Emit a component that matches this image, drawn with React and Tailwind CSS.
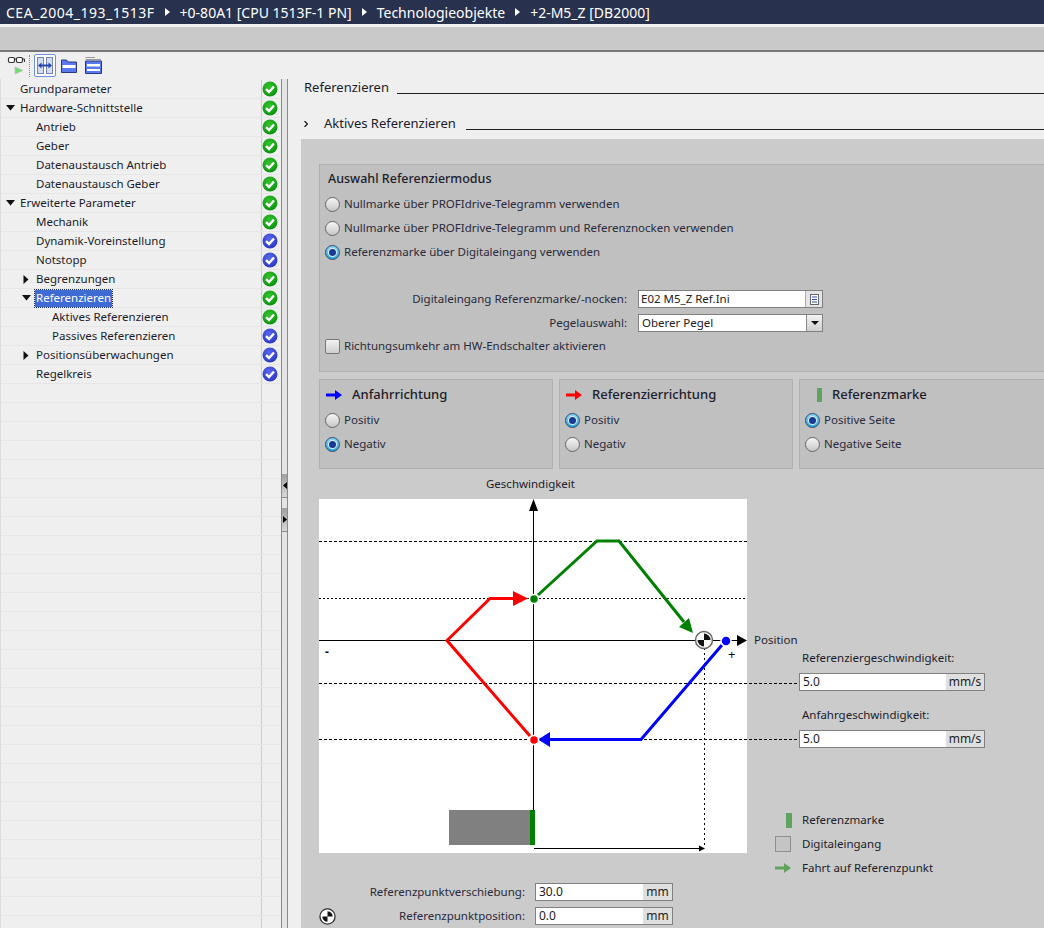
import React from 'react'

const font = { fontFamily: '"Noto Sans", sans-serif' }

const treeRows = [
  { label: 'Grundparameter', indent: 20, status: 'green' },
  { label: 'Hardware-Schnittstelle', indent: 20, arrow: 'down', status: 'green' },
  { label: 'Antrieb', indent: 36, status: 'green' },
  { label: 'Geber', indent: 36, status: 'green' },
  { label: 'Datenaustausch Antrieb', indent: 36, status: 'green' },
  { label: 'Datenaustausch Geber', indent: 36, status: 'green' },
  { label: 'Erweiterte Parameter', indent: 20, arrow: 'down', status: 'green' },
  { label: 'Mechanik', indent: 36, status: 'green' },
  { label: 'Dynamik-Voreinstellung', indent: 36, status: 'blue' },
  { label: 'Notstopp', indent: 36, status: 'blue' },
  { label: 'Begrenzungen', indent: 36, arrow: 'right', status: 'green' },
  { label: 'Referenzieren', indent: 36, arrow: 'down', status: 'green', selected: true },
  { label: 'Aktives Referenzieren', indent: 52, status: 'green' },
  { label: 'Passives Referenzieren', indent: 52, status: 'blue' },
  { label: 'Positionsüberwachungen', indent: 36, arrow: 'right', status: 'blue' },
  { label: 'Regelkreis', indent: 36, status: 'blue' },
  ...Array.from({ length: 30 }, () => ({})),
]

function StatusIcon({ color }) {
  const id = color === 'green' ? 'gGreen' : 'gBlue'
  return (
    <svg width="16" height="16" viewBox="0 0 16 16">
      <defs>
        <radialGradient id={id} cx="0.45" cy="0.35" r="0.75">
          <stop offset="0" stopColor={color === 'green' ? '#33c52c' : '#5a68ee'} />
          <stop offset="1" stopColor={color === 'green' ? '#078a0b' : '#2231b8'} />
        </radialGradient>
      </defs>
      <circle cx="8" cy="8" r="7.5" fill={`url(#${id})`} />
      <path d="M4 8.2 L7 11 L12 5.5" fill="none" stroke="#fff" strokeWidth="2.4" />
    </svg>
  )
}

function TreeArrow({ dir }) {
  if (dir === 'down') {
    return <svg width="9" height="6" viewBox="0 0 9 6"><path d="M0 0H9L4.5 5.5Z" fill="#111" /></svg>
  }
  return <svg width="6" height="9" viewBox="0 0 6 9"><path d="M0.5 0V9L5.5 4.5Z" fill="#111" /></svg>
}

function TreeRow({ row }) {
  return (
    <div className="flex h-[19px] border-b border-[#e6e6e6]">
      <div className="relative flex w-[260px] items-center text-[11.5px] text-[#1c1c2a]" style={{ paddingLeft: row.indent ? row.indent - 1 : 0 }}>
        {row.arrow && (
          <span className="absolute flex w-[10px] justify-center" style={{ left: row.indent - 16 }}>
            <TreeArrow dir={row.arrow} />
          </span>
        )}
        {row.selected ? (
          <span className="-ml-px h-[17px] bg-[#3f6cd4] px-px leading-[16px] text-white outline-1 outline-dotted outline-[#1a2a60]">{row.label}</span>
        ) : (
          row.label
        )}
      </div>
      <div className="flex w-[20px] items-center border-l border-[#cdcdcd]">
        {row.status && <StatusIcon color={row.status} />}
      </div>
    </div>
  )
}

function Radio({ checked }) {
  return (
    <span
      className={`flex h-[15px] w-[15px] shrink-0 items-center justify-center rounded-full border bg-gradient-to-b ${
        checked ? 'border-[#2c4a66] from-[#8ad6f2] to-[#27a2dc]' : 'border-[#666] from-[#f6f6f6] to-[#c6c6c6]'
      }`}
    >
      {checked && <span className="h-[7px] w-[7px] rounded-full bg-[#1a3a90] ring-1 ring-[#d8f0fa]" />}
    </span>
  )
}

function RadioRow({ label, checked }) {
  return (
    <div className="flex h-[24px] items-center gap-[4px] text-[11.5px] text-[#2a2a3a]">
      <Radio checked={checked} />
      <span>{label}</span>
    </div>
  )
}

function UnitInput({ value, unit, width, unitWidth }) {
  return (
    <div className={`flex h-[18px] border border-[#808080] bg-white text-[12px] leading-[16px] text-[#222] ${width}`}>
      <span className="flex-1 pl-[3px]">{value}</span>
      <span className={`bg-[#dfdfdf] text-center ${unitWidth}`}>{unit}</span>
    </div>
  )
}

function OriginIcon({ size = 17 }) {
  return (
    <svg width={size} height={size} viewBox="0 0 18 18" className="shrink-0">
      <circle cx="9" cy="9" r="8" fill="#fff" stroke="#333" strokeWidth="1.4" />
      <path d="M9 9V3.5A5.5 5.5 0 0 1 14.5 9Z M9 9V14.5A5.5 5.5 0 0 1 3.5 9Z" fill="#111" />
    </svg>
  )
}

function DirectionBox({ title, icon, options, className }) {
  return (
    <div className={`h-[90px] border border-[#b0b0b0] bg-[#c0c0c0] pl-[5px] ${className}`}>
      <div className="ml-px flex h-[28px] items-center pt-[1px]">
        <span className="flex w-[26px] justify-start">{icon}</span>
        <span className="text-[13px] font-medium text-[#1c1c2a]">{title}</span>
      </div>
      <div>
        {options.map(o => <RadioRow key={o.label} label={o.label} checked={o.checked} />)}
      </div>
    </div>
  )
}

function ArrowIcon({ color }) {
  return (
    <svg width="16" height="10" viewBox="0 0 16 10">
      <path d="M0 3.5H9V0L16 5L9 10V6.5H0Z" fill={color} />
    </svg>
  )
}

function SectionTitle({ text, lineClass }) {
  return (
    <div className="flex items-end">
      <span className="pb-[2px] text-[13px] leading-[14px] text-[#1c1c2a]">{text}</span>
      <div className={`mb-[2px] flex-1 border-b border-[#222] ${lineClass}`} />
    </div>
  )
}

function Diagram() {
  return (
    <svg width="700" height="370" viewBox="0 0 700 370" className="absolute left-0 top-0">
      <rect x="0" y="16" width="428" height="354" fill="#fff" />
      {/* Hilfslinien */}
      <path d="M0 58.5H428" stroke="#000" strokeDasharray="3 2" />
      <path d="M0 115.5H428" stroke="#000" strokeDasharray="2 2" />
      <path d="M0 200.5H481" stroke="#000" strokeDasharray="3 2" />
      <path d="M0 256.5H481" stroke="#000" strokeDasharray="3 2" />
      <path d="M385.5 165V365" stroke="#000" strokeDasharray="2 3" />
      {/* Achsen */}
      <path d="M214.5 24V327" stroke="#000" />
      <path d="M214.5 16L210 28H219Z" fill="#000" />
      <path d="M0 157.5H418" stroke="#000" />
      <path d="M418 152V163L428 157.5Z" fill="#000" />
      {/* Referenzfahrt */}
      <path d="M219 112L278 58H300L365 139" fill="none" stroke="#008000" strokeWidth="3" />
      <path d="M374 150L360 144L370 135Z" fill="#008000" />
      <path d="M196 115.5H171L128 157.5L211 253" fill="none" stroke="#ff0000" strokeWidth="3" />
      <path d="M209 115.5L194 108V123Z" fill="#ff0000" />
      <path d="M403 162L322 256.5H231" fill="none" stroke="#0000ff" strokeWidth="3" />
      <path d="M219 256.5L231 249V264Z" fill="#0000ff" />
      <circle cx="215" cy="116" r="4.5" fill="#008000" stroke="#fff" strokeWidth="1.5" />
      <circle cx="215" cy="257" r="4.5" fill="#ff0000" stroke="#fff" strokeWidth="1.5" />
      <circle cx="407" cy="158" r="5" fill="#0000ff" stroke="#fff" strokeWidth="1.5" />
      <circle cx="385" cy="157" r="8.5" fill="#fff" stroke="#666" strokeWidth="1.5" />
      <path d="M385 157V150.5A6.5 6.5 0 0 1 391.5 157Z M385 157V163.5A6.5 6.5 0 0 1 378.5 157Z" fill="#111" />
      {/* Referenzmarke */}
      <rect x="130" y="327" width="81" height="35" fill="#808080" />
      <rect x="211" y="327" width="5" height="35" fill="#008000" />
      <path d="M215 365.5H382" stroke="#000" />
      <path d="M380 362.5V368.5L386 365.5Z" fill="#000" />
    </svg>
  )
}

export default function App() {
  return (
    <div className="flex h-[928px] w-[1044px] flex-col overflow-hidden bg-[#efefef]" style={font}>
      {/* Titelleiste */}
      <div className="flex h-[24px] shrink-0 items-center bg-[#28324e] pl-[6px] text-[14px] text-white">
        <span className="tracking-[0.5px]">CEA_2004_193_1513F</span>
        <svg width="5" height="8" className="mx-[10px]"><path d="M0 0V8L5 4Z" fill="#fff" /></svg>
        <span>+0-80A1 [CPU 1513F-1 PN]</span>
        <svg width="5" height="8" className="mx-[10px]"><path d="M0 0V8L5 4Z" fill="#fff" /></svg>
        <span>Technologieobjekte</span>
        <svg width="5" height="8" className="mx-[10px]"><path d="M0 0V8L5 4Z" fill="#fff" /></svg>
        <span>+2-M5_Z [DB2000]</span>
      </div>
      <div className="h-[3px] shrink-0 bg-[#f0f0f0]" />
      <div className="h-[25px] shrink-0 border-b-2 border-[#777] bg-[#c9c9c9]" />

      {/* Werkzeugleiste */}
      <div className="flex h-[27px] shrink-0 items-center pl-[7px]">
        <svg width="18" height="20" viewBox="0 0 18 20">
          <rect x="1.5" y="1.5" width="6" height="5" rx="1.5" fill="#fff" stroke="#333" strokeWidth="1.2" />
          <rect x="9.5" y="1.5" width="6" height="5" rx="1.5" fill="#fff" stroke="#333" strokeWidth="1.2" />
          <path d="M7.5 3H9.5M15.5 3H17.5V6" fill="none" stroke="#333" />
          <path d="M8 11V18L16 14.5Z" fill="#6fdc6f" stroke="#b8b8b8" strokeWidth="0.6" />
        </svg>
        <div className="ml-[4px] mr-[4px] h-[22px] border-l border-dotted border-[#888]" />
        <div className="flex h-[23px] w-[22px] items-center justify-center rounded-[2px] border border-[#6f8fe0] bg-white">
          <svg width="16" height="17" viewBox="0 0 16 17">
            <rect x="0.5" y="0.5" width="6" height="16" fill="#d4dcf3" stroke="#7484b0" />
            <rect x="9.5" y="0.5" width="6" height="16" fill="#d4dcf3" stroke="#7484b0" />
            <path d="M1 8.5L4.5 5.5V7.5H11.5V5.5L15 8.5L11.5 11.5V9.5H4.5V11.5Z" fill="#2347b0" />
          </svg>
        </div>
        <svg width="16" height="14" viewBox="0 0 16 14" className="ml-[5px]">
          <path d="M0.5 1H5.5L7 3H15.5V13.5H0.5Z" fill="#5a78f0" stroke="#29387c" />
          <rect x="1.5" y="6" width="13" height="3" fill="#fff" />
        </svg>
        <svg width="17" height="17" viewBox="0 0 17 17" className="ml-[8px]">
          <path d="M0.5 0.5H10M0.5 2.5H16" stroke="#999" />
          <path d="M0.5 4H16.5V16.5H0.5Z" fill="#5a78f0" stroke="#29387c" />
          <rect x="2" y="7" width="13" height="2.5" fill="#fff" />
          <rect x="2" y="12" width="13" height="2" fill="#fff" />
        </svg>
      </div>

      <div className="flex min-h-0 flex-1">
        {/* Navigationsbaum */}
        <div className="w-[281px] shrink-0 overflow-hidden border-l border-[#dcdcdc] pt-px">
          {treeRows.map((row, i) => <TreeRow key={i} row={row} />)}
        </div>

        {/* Splitter */}
        <div className="flex w-[7px] shrink-0 flex-col border-x border-[#8a8a8a] bg-[#e4e4e4]">
          <div className="h-[395px]" />
          <div className="flex h-[24px] items-center justify-center border-b border-[#8a8a8a] bg-gradient-to-b from-[#a0a0a0] to-[#d8d8d8]">
            <svg width="4" height="7"><path d="M4 0V7L0 3.5Z" fill="#000" /></svg>
          </div>
          <div className="h-[10px]" />
          <div className="flex h-[24px] items-center justify-center border-b border-[#8a8a8a] bg-gradient-to-b from-[#a0a0a0] to-[#d8d8d8]">
            <svg width="4" height="7"><path d="M0 0V7L4 3.5Z" fill="#000" /></svg>
          </div>
        </div>

        {/* Inhalt */}
        <div className="min-w-0 flex-1">
          <div className="ml-[16px] pt-[1px]">
            <SectionTitle text="Referenzieren" lineClass="ml-[8px]" />
          </div>
          <div className="ml-[16px] mt-[20px] flex h-[16px] items-end">
            <svg width="4" height="6" className="mb-[5px] mr-[16px]"><path d="M0.5 0L3.5 3L0.5 6" fill="none" stroke="#111" strokeWidth="1.2" /></svg>
            <div className="flex-1"><SectionTitle text="Aktives Referenzieren" lineClass="ml-[10px]" /></div>
          </div>

          <div className="ml-[13px] mt-[7px] bg-[#cbcbcb] pl-[18px] pt-[25px]">
            {/* Auswahl Referenziermodus */}
            <div className="h-[208px] border border-r-0 border-[#b0b0b0] bg-[#c0c0c0] pl-[5px] pt-[5px]">
              <div className="ml-[3px] h-[18px] text-[12.5px] font-medium leading-[18px] text-[#1c1c2a]">Auswahl Referenziermodus</div>
              <div className="mt-[4px]">
                <RadioRow label="Nullmarke über PROFIdrive-Telegramm verwenden" />
                <RadioRow label="Nullmarke über PROFIdrive-Telegramm und Referenznocken verwenden" />
                <RadioRow label="Referenzmarke über Digitaleingang verwenden" checked />
              </div>
              <div className="mt-[26px] flex h-[18px] items-center">
                <span className="w-[302px] text-right text-[11.5px] text-[#2a2a3a]">Digitaleingang Referenzmarke/-nocken:</span>
                <div className="ml-[11px] flex h-[18px] w-[185px] border border-[#808080] bg-white text-[11.5px] leading-[16px] text-[#222]">
                  <span className="flex-1 pl-[2px]">E02 M5_Z Ref.Ini</span>
                  <span className="flex w-[17px] items-center justify-center border-l border-[#aaa] bg-[#e4e4e4]">
                    <svg width="9" height="11" viewBox="0 0 9 11">
                      <rect x="0.5" y="0.5" width="8" height="10" fill="#fff" stroke="#667" />
                      <path d="M2 3H7M2 5.5H7M2 8H7" stroke="#2a4fa0" />
                    </svg>
                  </span>
                </div>
              </div>
              <div className="mt-[6px] flex h-[18px] items-center">
                <span className="w-[302px] text-right text-[11.5px] text-[#2a2a3a]">Pegelauswahl:</span>
                <div className="ml-[11px] flex h-[18px] w-[185px] border border-[#808080] bg-white text-[11.5px] leading-[16px] text-[#222]">
                  <span className="flex-1 pl-[3px]">Oberer Pegel</span>
                  <span className="flex w-[16px] items-center justify-center border-l border-[#888] bg-gradient-to-b from-[#f4f4f4] to-[#cfcfcf]">
                    <svg width="8" height="4"><path d="M0 0H8L4 4Z" fill="#111" /></svg>
                  </span>
                </div>
              </div>
              <div className="mt-[5px] flex h-[18px] items-center gap-[4px] text-[11.5px] text-[#2a2a3a]">
                <span className="h-[15px] w-[15px] shrink-0 rounded-[2px] border border-[#777] bg-gradient-to-b from-[#f2f2f2] to-[#cfcfcf]" />
                <span>Richtungsumkehr am HW-Endschalter aktivieren</span>
              </div>
            </div>

            {/* Richtungen */}
            <div className="mt-[7px] flex gap-[6px]">
              <DirectionBox
                className="w-[234px]"
                title="Anfahrrichtung"
                icon={<ArrowIcon color="#0000ff" />}
                options={[{ label: 'Positiv' }, { label: 'Negativ', checked: true }]}
              />
              <DirectionBox
                className="w-[234px]"
                title="Referenzierrichtung"
                icon={<ArrowIcon color="#ff0000" />}
                options={[{ label: 'Positiv', checked: true }, { label: 'Negativ' }]}
              />
              <DirectionBox
                className="flex-1 border-r-0"
                title="Referenzmarke"
                icon={<span className="ml-[11px] h-[14px] w-[5px] bg-[#5fa35f]" />}
                options={[{ label: 'Positive Seite', checked: true }, { label: 'Negative Seite' }]}
              />
            </div>

            {/* Diagramm */}
            <div className="relative mt-[14px] h-[445px]">
              <Diagram />
              <span className="absolute left-[167px] top-[-8px] text-[11.5px] text-[#1c1c2a]">Geschwindigkeit</span>
              <span className="absolute left-[435px] top-[148px] text-[11.5px] text-[#1c1c2a]">Position</span>
              <span className="absolute left-[6px] top-[160px] text-[12px] font-bold text-[#111]">-</span>
              <span className="absolute left-[409px] top-[162px] text-[13px] text-[#111]">+</span>

              <span className="absolute left-[483px] top-[166px] text-[11.5px] text-[#1c1c2a]">Referenziergeschwindigkeit:</span>
              <div className="absolute left-[480px] top-[190px]">
                <UnitInput value="5.0" unit="mm/s" width="w-[186px]" unitWidth="w-[38px]" />
              </div>
              <span className="absolute left-[483px] top-[223px] text-[11.5px] text-[#1c1c2a]">Anfahrgeschwindigkeit:</span>
              <div className="absolute left-[480px] top-[247px]">
                <UnitInput value="5.0" unit="mm/s" width="w-[186px]" unitWidth="w-[38px]" />
              </div>

              {/* Legende */}
              <div className="absolute left-[456px] top-[325px] text-[11.5px] text-[#1c1c2a]">
                <div className="flex h-[24px] items-center">
                  <span className="flex w-[27px] justify-center"><span className="h-[15px] w-[6px] bg-[#5fa35f]" /></span>
                  <span>Referenzmarke</span>
                </div>
                <div className="flex h-[24px] items-center">
                  <span className="mr-[11px] h-[16px] w-[16px] border border-[#8e8e8e] bg-[#c4c4c4]" />
                  <span>Digitaleingang</span>
                </div>
                <div className="flex h-[24px] items-center">
                  <span className="mr-[11px] w-[16px]"><ArrowIcon color="#5fa35f" /></span>
                  <span>Fahrt auf Referenzpunkt</span>
                </div>
              </div>

              {/* Referenzpunkt */}
              <div className="absolute left-0 top-[400px] flex flex-col gap-[6px]">
                <div className="flex h-[18px] items-center">
                  <span className="w-[206px] text-right text-[11.5px] text-[#2a2a3a]">Referenzpunktverschiebung:</span>
                  <span className="ml-[10px]"><UnitInput value="30.0" unit="mm" width="w-[138px]" unitWidth="w-[29px]" /></span>
                </div>
                <div className="flex h-[18px] items-center">
                  <OriginIcon />
                  <span className="w-[189px] text-right text-[11.5px] text-[#2a2a3a]">Referenzpunktposition:</span>
                  <span className="ml-[10px]"><UnitInput value="0.0" unit="mm" width="w-[138px]" unitWidth="w-[29px]" /></span>
                </div>
              </div>
            </div>
          </div>
        </div>
      </div>
    </div>
  )
}
